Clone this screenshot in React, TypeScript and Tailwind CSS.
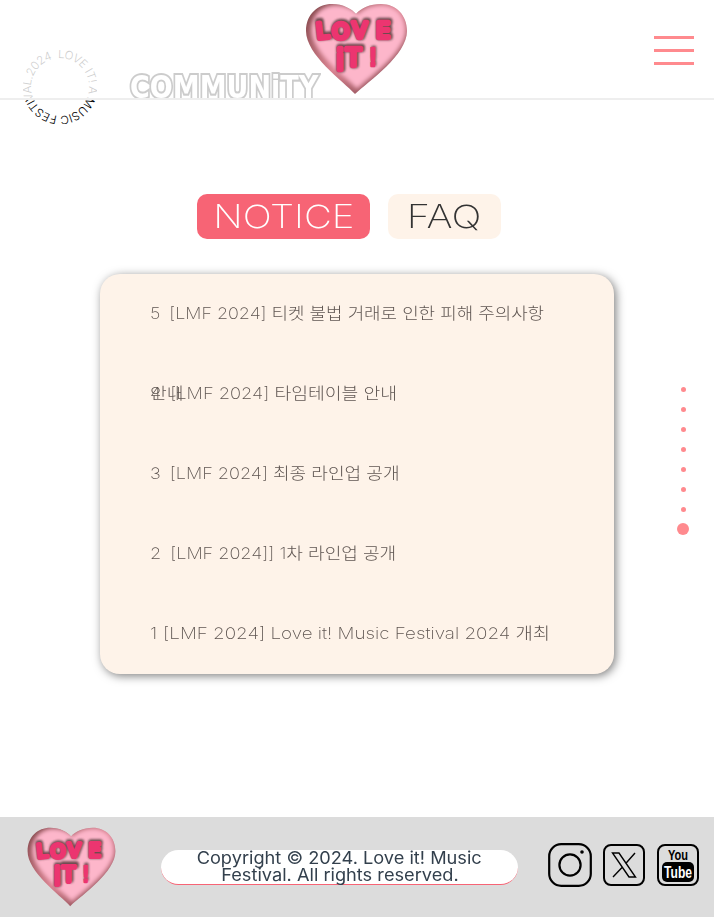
const bodyFont = "font-['Inter','Noto_Sans_CJK_KR',sans-serif]";

const notices = [
  { no: '5', stretch: 'scale-x-[1.12]', gap: 'ml-[8px]', title: '[LMF 2024] 티켓 불법 거래로 인한 피해 주의사항' },
  { no: '4', stretch: 'scale-x-[1.14]', gap: 'ml-[8px]', title: '[LMF 2024] 타임테이블 안내', overlay: '안내' },
  { no: '3', stretch: 'scale-x-[1.13]', gap: 'ml-[8px]', title: '[LMF 2024] 최종 라인업 공개' },
  { no: '2', stretch: 'scale-x-[1.13]', gap: 'ml-[8px]', title: '[LMF 2024]] 1차 라인업 공개' },
  { no: '1', stretch: 'scale-x-[1.176]', gap: 'ml-[5px]', title: '[LMF 2024] Love it! Music Festival 2024 개최' },
];

function HeartLogo({ id, className }: { id: string; className: string }) {
  const heart =
    'M50 91C38 78 1 52 1 28C1 11 13 1 27 1C38 1 47 6 51 11C56 5 65 1 76 1C91 1 102 12 102 28C102 52 64 78 50 91Z';
  const letters = (
    <>
      <text x="12" y="36" fontSize="22" transform="rotate(-6 12 36)">L</text>
      <text x="27" y="36" fontSize="22">O</text>
      <text x="47" y="35" fontSize="22">V</text>
      <text x="71" y="35" fontSize="22">E</text>
      <text x="31" y="67" fontSize="28">i</text>
      <text x="41" y="63" fontSize="24">T</text>
      <text x="63" y="63" fontSize="24" strokeWidth="2.6">!</text>
    </>
  );

  return (
    <svg viewBox="0 0 103 92" className={className}>
      <defs>
        <clipPath id={`${id}-clip`}>
          <path d={heart} />
        </clipPath>
        <linearGradient id={`${id}-edge`} x1="0" y1="0" x2="1" y2="1">
          <stop offset="0" stopColor="#7d4346" />
          <stop offset="0.5" stopColor="#d8818f" />
          <stop offset="1" stopColor="#6f3b40" />
        </linearGradient>
        <filter id={`${id}-blur`} x="-20%" y="-20%" width="140%" height="140%">
          <feGaussianBlur stdDeviation="2.4" />
        </filter>
        <filter id={`${id}-shade`} x="-20%" y="-20%" width="140%" height="140%">
          <feGaussianBlur stdDeviation="1.1" />
        </filter>
      </defs>
      <path d={heart} fill={`url(#${id}-edge)`} />
      <g clipPath={`url(#${id}-clip)`}>
        <path
          d={heart}
          fill="#fdb6ca"
          filter={`url(#${id}-blur)`}
          transform="translate(52 44) scale(0.93) translate(-50 -46)"
        />
        <g
          fontFamily="'DejaVu Sans', sans-serif"
          fill="#54383b"
          stroke="#54383b"
          strokeWidth="6.5"
          strokeLinejoin="round"
          strokeLinecap="round"
          opacity="0.85"
          filter={`url(#${id}-shade)`}
          transform="translate(1 -1.5)"
        >
          {letters}
        </g>
        <g
          fontFamily="'DejaVu Sans', sans-serif"
          fill="#ec3570"
          stroke="#ec3570"
          strokeWidth="4.4"
          strokeLinejoin="round"
          strokeLinecap="round"
        >
          {letters}
        </g>
      </g>
    </svg>
  );
}

function CircleText() {
  return (
    <svg viewBox="0 0 74 74" className="h-[74px] w-[74px] shrink-0">
      <defs>
        <path id="ring" d="M37 8a29 29 0 1 1 -0.01 0" />
      </defs>
      <text
        fontFamily="'Inter', sans-serif"
        fontSize="11.5"
        fill="#000"
        fontWeight="300"
        transform="rotate(-4 37 37)"
      >
        <textPath href="#ring" textLength="176" startOffset="0">
          LOVE IT! A MUSIC FESTIVAL.2024
        </textPath>
      </text>
    </svg>
  );
}

function InstagramIcon() {
  return (
    <svg viewBox="0 0 44 44" className="h-11 w-11" fill="none" stroke="#000" strokeWidth="2.2">
      <rect x="1.2" y="1.2" width="41.6" height="41.6" rx="12" />
      <circle cx="22" cy="22" r="10.6" />
      <circle cx="34" cy="9" r="1.8" fill="#000" stroke="none" />
    </svg>
  );
}

function XIcon() {
  return (
    <svg viewBox="0 0 42 42" className="h-[42px] w-[42px]" fill="none" stroke="#000">
      <rect x="1" y="1" width="40" height="40" rx="7" strokeWidth="2" />
      <path d="M9.5 9h6.5l16.5 24h-6.5ZM32 9 22.5 19.8M19.5 23 10 33" strokeWidth="1.4" />
    </svg>
  );
}

function YoutubeIcon() {
  return (
    <svg viewBox="0 0 42 42" className="h-[42px] w-[42px]">
      <rect x="1" y="1" width="40" height="40" rx="7" fill="none" stroke="#000" strokeWidth="2" />
      <text
        x="21"
        y="15.5"
        textAnchor="middle"
        fontFamily="'Liberation Sans', sans-serif"
        fontWeight="700"
        fontSize="15"
        textLength="20"
        lengthAdjust="spacingAndGlyphs"
      >
        You
      </text>
      <rect x="5" y="18" width="32" height="20" rx="5" fill="#000" />
      <text
        x="21"
        y="34"
        textAnchor="middle"
        fontFamily="'Liberation Sans', sans-serif"
        fontWeight="700"
        fontSize="16.5"
        fill="#fff"
        textLength="28"
        lengthAdjust="spacingAndGlyphs"
      >
        Tube
      </text>
    </svg>
  );
}

export default function App() {
  return (
    <div className={`relative flex h-[917px] w-full flex-col overflow-hidden bg-white ${bodyFont}`}>
      {/* Title sits under the see-through header */}
      <section className="flex items-start pl-[23px] pt-[50px]">
        <CircleText />
        <h1 className="ml-[33px] mt-[23px] origin-top scale-y-[1.2] font-['DejaVu_Sans',sans-serif] text-[27px] font-bold leading-[24px] text-white [-webkit-text-stroke:3.5px_#000] [paint-order:stroke_fill] [stroke-linejoin:round]">
          COMMUNiTY
        </h1>
      </section>

      {/* Header */}
      <header className="absolute inset-x-0 top-0 h-[100px] border-b-2 border-[#eeeeee] bg-white/80">
        <div className="absolute left-[305px] top-[3px]">
          <HeartLogo id="top" className="h-[92px] w-[103px]" />
        </div>
        <button type="button" aria-label="menu" className="absolute right-[20px] top-[36px] flex w-10 flex-col gap-[10px]">
          <span className="h-[3px] w-full bg-[#ff8a8e]" />
          <span className="h-[3px] w-full bg-[#ff8a8e]" />
          <span className="h-[3px] w-full bg-[#ff8a8e]" />
        </button>
      </header>

      {/* Tabs */}
      <div className="ml-[197px] mt-[70px] flex gap-[18px] text-[32px] font-extralight leading-none">
        <button type="button" className="flex h-[45px] w-[173px] items-center justify-center rounded-[10px] bg-[#f76475] text-white">
          <span className="scale-x-[1.2]">NOTICE</span>
        </button>
        <button type="button" className="flex h-[45px] w-[113px] items-center justify-center rounded-[10px] bg-[#fef3e9] text-[#333333]">
          <span className="scale-x-[1.24]">FAQ</span>
        </button>
      </div>

      {/* Notice list */}
      <div className="ml-[100px] mt-[35px] h-[400px] w-[514px] rounded-[20px] bg-[#fef3e9] shadow-[2px_2px_10px_rgba(0,0,0,0.5)]">
        {notices.map((n) => (
          <div key={n.no} className="flex h-20 items-center whitespace-nowrap pb-[3px] pl-[50px] text-[16px] font-extralight text-[#5f5652]">
            <div className={`relative flex origin-left ${n.stretch}`}>
              <span>{n.no}</span>
              <span className={n.gap}>{n.title}</span>
              {n.overlay && <span className="absolute left-0">{n.overlay}</span>}
            </div>
          </div>
        ))}
      </div>

      {/* Section dots */}
      <nav className="absolute right-[25px] top-[379px] flex w-3 flex-col items-center">
        {[0, 1, 2, 3, 4, 5, 6].map((i) => (
          <span key={i} className="flex h-5 items-center">
            <span className="h-[5px] w-[5px] rounded-full bg-[#ff8a8e]" />
          </span>
        ))}
        <span className="flex h-5 items-center">
          <span className="h-3 w-3 rounded-full bg-[#ff8a8e]" />
        </span>
      </nav>

      {/* Footer */}
      <footer className="mt-auto flex h-[100px] items-center bg-[#dcdcdc]">
        <HeartLogo id="foot" className="ml-[25px] h-[80px] w-[93px] shrink-0" />
        <p className="ml-[43px] flex h-[35px] w-[357px] flex-col items-center justify-center rounded-full border-b border-[#f76475] bg-white text-center text-[17px] leading-[17px] text-[#33404d]">
          <span className="scale-x-[1.07]">Copyright © 2024. Love it! Music</span>
          <span className="scale-x-[1.07]">Festival. All rights reserved.</span>
        </p>
        <div className="mb-1 ml-[30px] flex items-center">
          <InstagramIcon />
          <span className="ml-[11px]"><XIcon /></span>
          <span className="ml-3"><YoutubeIcon /></span>
        </div>
      </footer>
    </div>
  );
}
